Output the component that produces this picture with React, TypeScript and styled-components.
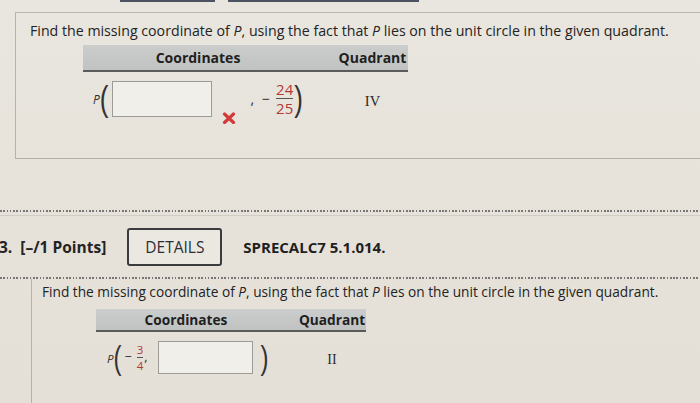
import React from "react";
import styled, { createGlobalStyle } from "styled-components";

const Global = createGlobalStyle`
  html, body { margin: 0; padding: 0; background: #e7e3db; overflow: hidden; }
  body { font-family: "Open Sans", "Liberation Sans", sans-serif; color: #2a2a2a; }
`;

const Page = styled.div`
  width: 700px;
  height: 403px;
  overflow: hidden;
  background: linear-gradient(180deg, #e9e6df 0%, #e6e2da 60%, #e4e0d7 100%);
`;

const TopStrip = styled.div`
  display: flex;
  gap: 13px;
  padding-left: 120px;
  height: 12px;
`;

const TabEdge = styled.div<{ $w: number }>`
  width: ${(p) => p.$w}px;
  height: 2px;
  background: #4d5362;
`;

const Card = styled.div<{ $left: number; $closed?: boolean; $h: number; $pt: number; $pl: number }>`
  margin-left: ${(p) => p.$left}px;
  border-left: 1px solid #b6b2a9;
  border-top: ${(p) => (p.$closed ? "1px solid #bcb8af" : "none")};
  border-bottom: ${(p) => (p.$closed ? "1px solid #b3afa6" : "none")};
  height: ${(p) => p.$h}px;
  padding: ${(p) => p.$pt}px 0 0 ${(p) => p.$pl}px;
  box-sizing: border-box;
`;

const Prompt = styled.div<{ $size: number }>`
  font-size: ${(p) => p.$size}px;
  line-height: 18px;
  white-space: nowrap;
  color: #232323;
`;

const Var = styled.i`
  font-style: italic;
`;

const Table = styled.div<{ $cols: string; $left: number; $top: number }>`
  display: grid;
  grid-template-columns: ${(p) => p.$cols};
  margin-left: ${(p) => p.$left}px;
  margin-top: ${(p) => p.$top}px;
  width: max-content;
`;

const HeadCell = styled.div<{ $h: number; $size: number; $pr?: number }>`
  height: ${(p) => p.$h}px;
  background: linear-gradient(180deg, #cbcdcd 0%, #c1c3c3 100%);
  border-bottom: 2px solid #5b5b5b;
  display: flex;
  align-items: center;
  justify-content: center;
  padding-right: ${(p) => p.$pr ?? 0}px;
  font-weight: 700;
  font-size: ${(p) => p.$size}px;
  color: #1f1f1f;
`;

const BodyCell = styled.div<{ $pt: number; $pl?: number; $center?: boolean }>`
  padding-top: ${(p) => p.$pt}px;
  padding-left: ${(p) => p.$pl ?? 0}px;
  display: flex;
  align-items: center;
  justify-content: ${(p) => (p.$center ? "center" : "flex-start")};
`;

const MathRow = styled.div`
  display: flex;
  align-items: center;
  color: #2e2e2e;
`;

const PVar = styled.span<{ $size: number }>`
  font-style: italic;
  font-size: ${(p) => p.$size}px;
  line-height: 1;
  margin-top: 2px;
`;

const Paren = styled.span<{ $size: number; $ml?: number; $mr?: number }>`
  display: inline-block;
  font-family: "Liberation Sans", sans-serif;
  font-size: ${(p) => p.$size}px;
  line-height: 1;
  transform: scaleY(1.35);
  margin-left: ${(p) => p.$ml ?? 0}px;
  margin-right: ${(p) => p.$mr ?? 0}px;
  color: #333;
`;

const AnswerBox = styled.div<{ $w: number; $h: number; $ml?: number }>`
  width: ${(p) => p.$w}px;
  height: ${(p) => p.$h}px;
  margin-left: ${(p) => p.$ml ?? 0}px;
  box-sizing: border-box;
  border: 1px solid #9b9b98;
  background: #f1efea;
`;

const WrongMark = styled.svg`
  align-self: flex-end;
  margin-bottom: -7px;
  margin-left: 10px;
  flex: none;
`;

const Sym = styled.span<{ $size: number; $ml?: number }>`
  font-size: ${(p) => p.$size}px;
  line-height: 1;
  margin-left: ${(p) => p.$ml ?? 0}px;
`;

const Frac = styled.span<{ $size: number; $ml?: number }>`
  display: inline-flex;
  flex-direction: column;
  align-items: center;
  font-size: ${(p) => p.$size}px;
  line-height: 1;
  color: #b13a35;
  margin-left: ${(p) => p.$ml ?? 0}px;
`;

const FracBar = styled.span`
  align-self: stretch;
  height: 1px;
  background: #555;
  margin: 1px 0 2px;
`;

const Roman = styled.span<{ $size: number }>`
  font-family: "Liberation Serif", serif;
  font-size: ${(p) => p.$size}px;
  color: #2a2a2a;
  margin-top: 5px;
`;

const DottedRule = styled.div<{ $top: number }>`
  margin-top: ${(p) => p.$top}px;
  height: 2px;
  background: repeating-linear-gradient(90deg, #767676 0 1.6px, transparent 1.6px 3.3px);
`;

const ThinRule = styled.div`
  margin-top: 3px;
  height: 1px;
  background: #d1cdc5;
`;

const QuestionBar = styled.div`
  height: 61px;
  display: flex;
  align-items: center;
  margin-left: -1px;
`;

const Points = styled.span`
  font-size: 15.5px;
  font-weight: 700;
  color: #242424;
  white-space: pre;
`;

const DetailsButton = styled.div`
  width: 95px;
  height: 38px;
  margin-left: 21px;
  box-sizing: border-box;
  border: 2px solid #3a3b3d;
  border-radius: 3px;
  display: flex;
  align-items: center;
  justify-content: center;
  font-size: 15.5px;
  color: #2c2e33;
  background: #ebe8e2;
`;

const Code = styled.span`
  margin-left: 21px;
  font-size: 15px;
  font-weight: 700;
  color: #1f1f1f;
`;

const XIcon = () => (
  <WrongMark width="14" height="12" viewBox="0 0 14 12">
    <path d="M2.5 2 L11.5 10.5 M11.5 2 L2.5 10.5" stroke="#d23a3a" strokeWidth="3.2" strokeLinecap="round" />
  </WrongMark>
);

const PromptText = ({ size }: { size: number }) => (
  <Prompt $size={size}>
    Find the missing coordinate of <Var>P</Var>, using the fact that <Var>P</Var> lies on the unit circle in the given quadrant.
  </Prompt>
);

export default function App() {
  return (
    <Page>
      <Global />
      <TopStrip>
        <TabEdge $w={95} />
        <TabEdge $w={191} />
      </TopStrip>

      <Card $left={15} $closed $h={147} $pt={9} $pl={14}>
        <PromptText size={14.2} />
        <Table $cols="254px 71px" $left={53} $top={5}>
          <HeadCell $h={25} $size={14} $pr={24}>Coordinates</HeadCell>
          <HeadCell $h={25} $size={14}>Quadrant</HeadCell>
          <BodyCell $pt={9} $pl={10}>
            <MathRow>
              <PVar $size={12}>P</PVar>
              <Paren $size={26} $mr={4}>(</Paren>
              <AnswerBox $w={100} $h={36} />
              <XIcon />
              <Sym $size={14} $ml={14}>,</Sym>
              <Sym $size={14} $ml={8}>−</Sym>
              <Frac $size={15} $ml={6}>
                <span>24</span>
                <FracBar />
                <span>25</span>
              </Frac>
              <Paren $size={26} $ml={1}>)</Paren>
            </MathRow>
          </BodyCell>
          <BodyCell $pt={9} $center>
            <Roman $size={14.5}>IV</Roman>
          </BodyCell>
        </Table>
      </Card>

      <DottedRule $top={51} />
      <ThinRule />
      <QuestionBar>
        <Points>3.  [–/1 Points]</Points>
        <DetailsButton>DETAILS</DetailsButton>
        <Code>SPRECALC7 5.1.014.</Code>
      </QuestionBar>
      <DottedRule $top={0} />

      <Card $left={31} $h={140} $pt={4} $pl={10}>
        <PromptText size={13.7} />
        <Table $cols="202px 68px" $left={54} $top={8}>
          <HeadCell $h={21} $size={13.7} $pr={22}>Coordinates</HeadCell>
          <HeadCell $h={21} $size={13.7}>Quadrant</HeadCell>
          <BodyCell $pt={9} $pl={11}>
            <MathRow>
              <PVar $size={11.5}>P</PVar>
              <Paren $size={24}>(</Paren>
              <Sym $size={12.5} $ml={3}>−</Sym>
              <Frac $size={11.5} $ml={5}>
                <span>3</span>
                <FracBar />
                <span>4</span>
              </Frac>
              <Sym $size={12.5} $ml={1}>,</Sym>
              <AnswerBox $w={95} $h={33} $ml={10} />
              <Paren $size={24} $ml={8}>)</Paren>
            </MathRow>
          </BodyCell>
          <BodyCell $pt={9} $center>
            <Roman $size={14}>II</Roman>
          </BodyCell>
        </Table>
      </Card>
    </Page>
  );
}
